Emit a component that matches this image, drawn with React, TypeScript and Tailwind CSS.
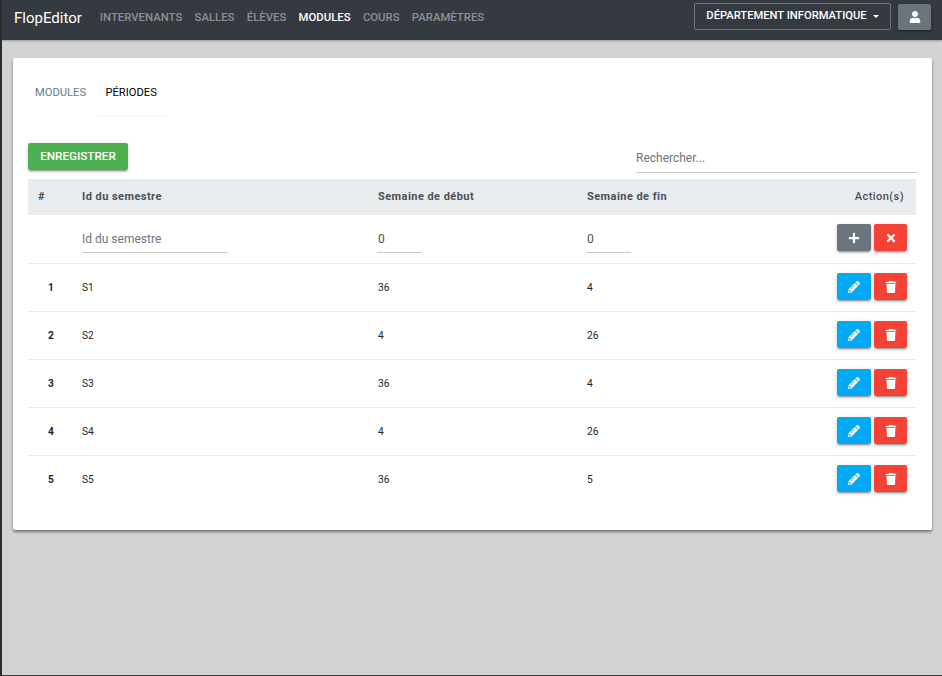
import React from 'react';
import { FaPlus, FaTimes, FaPencilAlt, FaTrash, FaUser } from 'react-icons/fa';

const navItems = [
    { label: 'INTERVENANTS', active: false },
    { label: 'SALLES', active: false },
    { label: 'ÉLÈVES', active: false },
    { label: 'MODULES', active: true },
    { label: 'COURS', active: false },
    { label: 'PARAMÈTRES', active: false },
];

const periods = [
    { id: 1, name: 'S1', start: 36, end: 4 },
    { id: 2, name: 'S2', start: 4, end: 26 },
    { id: 3, name: 'S3', start: 36, end: 4 },
    { id: 4, name: 'S4', start: 4, end: 26 },
    { id: 5, name: 'S5', start: 36, end: 5 },
];

const cols = 'grid grid-cols-[44px_296px_209px_1fr_auto] items-center';
const btnShadow = 'shadow-[0_2px_2px_0_rgba(0,0,0,0.14),0_3px_1px_-2px_rgba(0,0,0,0.2),0_1px_5px_0_rgba(0,0,0,0.12)]';

export default function App() {
    return (
        <div className="flex h-[676px] w-[942px] overflow-hidden bg-[#d3d3d3] font-['Roboto',sans-serif]">
            <div className="w-[2px] shrink-0 bg-[#2b2d33]" />
            <div className="flex min-w-0 flex-1 flex-col border-b border-[#3a3a3a]">
                {/* Navbar */}
                <nav className="flex h-[40px] shrink-0 items-center bg-[#343a40] pb-[7px] pl-[12px] pr-[11px] shadow-[0_1px_2px_rgba(0,0,0,0.3)]">
                    <span className="mr-[18px] mt-[3px] text-[15px] text-white">FlopEditor</span>
                    <div className="mt-[3px] flex gap-[12.3px] text-[11.35px] font-medium text-[#8b9096]">
                        {navItems.map(item => (
                            <span key={item.label} className={item.active ? 'text-white' : ''}>{item.label}</span>
                        ))}
                    </div>
                    <div className="ml-auto flex items-center gap-[7px]">
                        <button className="flex h-[27px] w-[197px] items-center justify-center gap-[5px] rounded-[2px] border border-[#6c757d] text-[11.2px] font-medium text-white">
                            DÉPARTEMENT INFORMATIQUE
                            <span className="ml-[1px] h-0 w-0 border-x-[3px] border-t-[3px] border-x-transparent border-t-white" />
                        </button>
                        <button className={`flex h-[26px] w-[33px] items-center justify-center rounded-[2px] bg-[#6c757d] text-[12px] text-white ${btnShadow}`}>
                            <FaUser />
                        </button>
                    </div>
                </nav>

                {/* Card */}
                <div className="ml-[11px] mr-[10px] mt-[18px] h-[472px] rounded-[2px] bg-white pl-[15px] pr-[16px] shadow-[0_2px_3px_rgba(0,0,0,0.45)]">
                    <div className="flex h-[85px] items-start pt-[27px] text-[11.2px]">
                        <span className="ml-[7px] text-[#607d8b]">MODULES</span>
                        <div className="ml-[11px] flex h-[32px] w-[70px] justify-center border-b border-[#f5f5f5] pr-[2px] text-black">PÉRIODES</div>
                    </div>

                    <div className="flex items-start justify-between">
                        <button className={`h-[27px] w-[100px] rounded-[2px] bg-[#4caf50] text-[11.7px] font-medium text-white ${btnShadow}`}>ENREGISTRER</button>
                        <input
                            placeholder="Rechercher..."
                            className="-mr-[1px] h-[30px] w-[281px] border-b border-[#c8c8c8] text-[12px] outline-none placeholder:text-[#6c757d]"
                        />
                    </div>

                    <div className={`${cols} mt-[6px] h-[36px] bg-[#e9ecef] pl-[10px] pr-[12px] text-[11px] font-bold tracking-[0.45px] text-[#495057]`}>
                        <span>#</span>
                        <span>Id du semestre</span>
                        <span>Semaine de début</span>
                        <span>Semaine de fin</span>
                        <span className="font-medium">Action(s)</span>
                    </div>

                    <div className={`${cols} h-[49px] border-b border-[#e9ecef] pl-[10px] pr-[9px]`}>
                        <span />
                        <input placeholder="Id du semestre" className="mt-[2px] h-[26px] w-[146px] border-b border-[#c8c8c8] pb-[2px] text-[12px] outline-none placeholder:text-[#6c757d]" />
                        <input defaultValue="0" className="-ml-[1px] mt-[2px] h-[26px] w-[45px] border-b border-[#c8c8c8] pb-[2px] pl-[1px] text-[12px] text-[#495057] outline-none" />
                        <input defaultValue="0" className="-ml-[1px] mt-[2px] h-[26px] w-[45px] border-b border-[#c8c8c8] pb-[2px] pl-[1px] text-[12px] text-[#495057] outline-none" />
                        <div className="mb-[3px] flex gap-[3px]">
                            <button className={`flex h-[27px] w-[34px] items-center justify-center rounded-[2px] bg-[#6c757d] text-[12px] text-white ${btnShadow}`}><FaPlus /></button>
                            <button className={`flex h-[27px] w-[33px] items-center justify-center rounded-[2px] bg-[#f44336] text-[12px] text-white ${btnShadow}`}><FaTimes /></button>
                        </div>
                    </div>

                    {periods.map(p => (
                        <div key={p.id} className={`${cols} h-[48px] border-b pl-[10px] pr-[9px] text-[10.2px] text-[#212529] ${p.id < 5 ? 'border-[#e9ecef]' : 'border-transparent'}`}>
                            <span className="pl-[10px] font-bold">{p.id}</span>
                            <span>{p.name}</span>
                            <span>{p.start}</span>
                            <span>{p.end}</span>
                            <div className="mb-[2px] flex gap-[3px]">
                                <button className={`flex h-[27px] w-[34px] items-center justify-center rounded-[2px] bg-[#03a9f4] text-[12px] text-white ${btnShadow}`}><FaPencilAlt /></button>
                                <button className={`flex h-[27px] w-[33px] items-center justify-center rounded-[2px] bg-[#f44336] text-[12px] text-white ${btnShadow}`}><FaTrash /></button>
                            </div>
                        </div>
                    ))}
                </div>
            </div>
        </div>
    );
}
